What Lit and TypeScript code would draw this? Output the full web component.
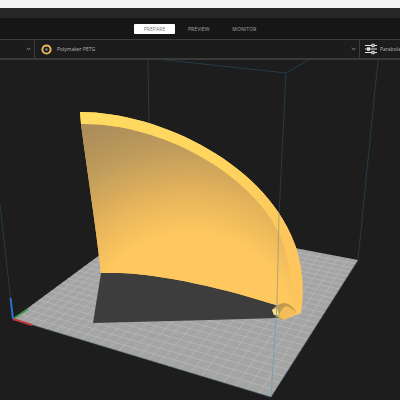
import { LitElement, html, css, svg } from "lit";
import { customElement } from "lit/decorators.js";

type P = [number, number];
const A: P = [13, 319], B: P = [147, 220], C: P = [358, 260], D: P = [271, 397];

// Projective map of the unit square onto the four plate corners.
function homography(p0: P, p1: P, p2: P, p3: P) {
  const dx1 = p1[0] - p2[0], dx2 = p3[0] - p2[0], sx = p0[0] - p1[0] + p2[0] - p3[0];
  const dy1 = p1[1] - p2[1], dy2 = p3[1] - p2[1], sy = p0[1] - p1[1] + p2[1] - p3[1];
  const den = dx1 * dy2 - dx2 * dy1;
  const g = (sx * dy2 - dx2 * sy) / den, h = (dx1 * sy - sx * dy1) / den;
  const a = p1[0] - p0[0] + g * p1[0], b = p3[0] - p0[0] + h * p3[0], c = p0[0];
  const d = p1[1] - p0[1] + g * p1[1], e = p3[1] - p0[1] + h * p3[1], f = p0[1];
  return (u: number, v: number): P => {
    const w = g * u + h * v + 1;
    return [(a * u + b * v + c) / w, (d * u + e * v + f) / w];
  };
}

const bottomToLeft = "C230 290 150 270 101 273C95 220 87 170 81 124Z";
const bodyD = `M80 112C160 112 270 165 297 250C302 268 305 290 301 313L283 320 276 305${bottomToLeft}`;
const faceD = `M81 124C155 122 250 170 280 235C288 258 292 280 293 302L283 320 276 305${bottomToLeft}`;
const bandD = "M80 112C160 112 270 165 297 250L280 235C250 170 155 122 81 124Z";

const map = homography(A, D, C, B);
const N = 26;
const gridLines = Array.from({ length: N - 1 }, (_, i) => (i + 1) / N).flatMap((t) => {
  const a = map(t, 0), b = map(t, 1), c = map(0, t), d = map(1, t);
  return [[a, b], [c, d]] as [P, P][];
});

@customElement("app-root")
export class AppRoot extends LitElement {
  static styles = css`
    :host { display: block; width: 400px; height: 400px; overflow: hidden; background: #1d1d1d;
      font-family: "Open Sans", "Liberation Sans", sans-serif; }
    .root { display: flex; flex-direction: column; height: 400px; }
    .chrome { height: 8px; background: #f3f3f3; flex: none; }
    .title { height: 10px; background: #262626; flex: none; }
    .tabs { height: 21px; background: #161616; flex: none; display: flex; align-items: center;
      padding-left: 134px; gap: 13px; border-bottom: 1px solid #3c3c3c; }
    .tab { font-size: 5px; color: #a9a9a9; height: 10px; line-height: 10px; letter-spacing: 0.1px; }
    .tab.on { background: #fff; color: #777; width: 41px; text-align: center; border-radius: 1px; }
    .tab.mon { margin-left: 10px; }
    .bar { height: 18px; background: #1c1c1c; flex: none; display: flex; align-items: center;
      border-bottom: 2px solid #3a3a3a; font-size: 5px; color: #b5b5b5; }
    .sec { height: 100%; display: flex; align-items: center; border-right: 1px solid #3c3c3c; }
    .s1 { width: 35px; justify-content: flex-end; padding-right: 3px; box-sizing: border-box; }
    .s2 { width: 325px; padding: 0 3px 0 6px; box-sizing: border-box; gap: 5px; }
    .s3 { flex: 1; padding-left: 5px; gap: 3px; white-space: nowrap; overflow: hidden; border-right: 0; }
    .grow { flex: 1; }
    .view { flex: 1; min-height: 0; }
    .view svg { display: block; filter: blur(0.35px); }
    svg { flex: none; }
  `;

  private chevron() {
    return html`<svg width="5" height="4" viewBox="0 0 5 4"><path d="M.7 1 2.5 2.8 4.3 1" fill="none" stroke="#b0b0b0" stroke-width=".8"/></svg>`;
  }

  render() {
    return html`<div class="root">
      <div class="chrome"></div>
      <div class="title"></div>
      <div class="tabs">
        <div class="tab on">PREPARE</div>
        <div class="tab">PREVIEW</div>
        <div class="tab mon">MONITOR</div>
      </div>
      <div class="bar">
        <div class="sec s1">${this.chevron()}</div>
        <div class="sec s2">
          <svg width="11" height="11" viewBox="0 0 11 11">
            <circle cx="5.5" cy="5.5" r="4.1" fill="#1c1c1c" stroke="#eab85c" stroke-width="2"/>
            <circle cx="5.5" cy="5.5" r="1.2" fill="#8a8a8a"/>
          </svg>
          <span>Polymaker PETG</span>
          <span class="grow"></span>
          ${this.chevron()}
        </div>
        <div class="sec s3">
          <svg width="12" height="12" viewBox="0 0 12 12" stroke="#e6e6e6" stroke-width="1" fill="#1c1c1c">
            <path d="M0 2.5h12M0 6h12M0 9.5h12"/>
            <rect x="7" y="1.3" width="2" height="2.4"/><rect x="2.5" y="4.8" width="2" height="2.4"/><rect x="7" y="8.3" width="2" height="2.4"/>
          </svg>
          <span>Parabola</span>
        </div>
      </div>
      <div class="view">
        <svg width="400" height="340" viewBox="0 60 400 340">
          <defs>
            <radialGradient id="face" cx="190" cy="340" r="235" gradientUnits="userSpaceOnUse">
              <stop offset=".45" stop-color="#ffc85f"/>
              <stop offset=".62" stop-color="#e6b45b"/>
              <stop offset=".82" stop-color="#bf9c5c"/>
              <stop offset="1" stop-color="#ab8c5a"/>
            </radialGradient>
            <linearGradient id="band" x1="80" y1="112" x2="290" y2="240" gradientUnits="userSpaceOnUse">
              <stop offset="0" stop-color="#ffdc60"/>
              <stop offset=".6" stop-color="#ffd45e"/>
              <stop offset="1" stop-color="#fcc65c"/>
            </linearGradient>
          </defs>
          <!-- far edges of the build volume -->
          <g fill="none" stroke="#253c47" stroke-width="1">
            <path d="M148 60 149 125M148 58 286 73M286 73 310 59M286 73 279 215M378 60 358 260"/>
            <path d="M13 319 0 205"/>
          </g>
          <!-- plate -->
          <polygon points="${A} ${B} ${C} ${D}" fill="#a4a4a4"/>
          <g stroke="#bdbdbd" stroke-width=".6">
            ${gridLines.map(([p, q]) => svg`<line x1=${p[0]} y1=${p[1]} x2=${q[0]} y2=${q[1]}/>`)}
          </g>
          <!-- shadow -->
          <polygon points="101,273 130,273 180,279 210,285 276,304 278,318 210,320 93,323" fill="#3d3d3d"/>
          <!-- part -->
          <path d=${bodyD} fill="#fcc65c"/>
          <path d=${faceD} fill="url(#face)"/>
          <path d=${bandD} fill="url(#band)"/>
          <!-- clip lump at the foot of the part -->
          <path d="M272 310C276 305 281 303 285 303 290 304 294 308 296 312L283 320C278 319 274 315 272 310Z" fill="#c09a4e"/>
          <path d="M279 317C280 310 284 306 287 306 291 308 294 310 296 312L284 320Z" fill="#f3bd58"/>
          <path d="M272 310 277 308 279 315 274 315Z" fill="#fbe08a"/>
          <!-- front upright -->
          <path d="M271 397 277 304" fill="none" stroke="#7fa0b0" stroke-width="1"/>
          <path d="M277 304 279 213" fill="none" stroke="#9a9a78" stroke-width=".8"/>
          <!-- near plate edges -->
          <path d="M13 319 271 397 358 260" fill="none" stroke="#5f7884" stroke-width=".6"/>
          <!-- axes -->
          <g fill="none" stroke-width="2">
            <path d="M13 319 28 309" stroke="#3d9a4e"/>
            <path d="M13 319 32 325" stroke="#c43a3a"/>
            <path d="M13 319 10.5 298" stroke="#2f6fd0"/>
          </g>
        </svg>
      </div>
    </div>`;
  }
}
